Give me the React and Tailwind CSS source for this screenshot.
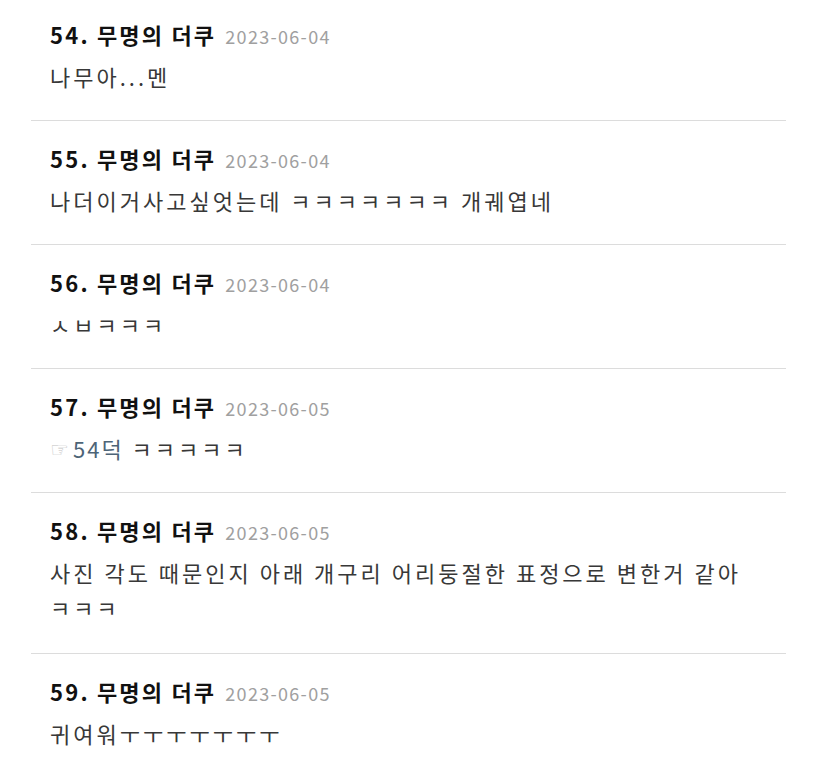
const comments = [
  { no: 54, date: '2023-06-04', body: ['나무아...멘'] },
  { no: 55, date: '2023-06-04', body: ['나더이거사고싶엇는데 ㅋㅋㅋㅋㅋㅋㅋ 개궤엽네'] },
  { no: 56, date: '2023-06-04', body: ['ㅅㅂㅋㅋㅋ'] },
  { no: 57, date: '2023-06-05', reply: '54덕', body: [' ㅋㅋㅋㅋㅋ'] },
  { no: 58, date: '2023-06-05', body: ['사진 각도 때문인지 아래 개구리 어리둥절한 표정으로 변한거 같아', 'ㅋㅋㅋ'] },
  { no: 59, date: '2023-06-05', body: ['귀여워ㅜㅜㅜㅜㅜㅜㅜ'] },
];

export default function App() {
  return (
    <div
      className="w-[830px] h-[762px] overflow-hidden bg-white"
      style={{ fontFamily: '"Noto Sans CJK KR", "Noto Sans", sans-serif' }}
    >
      <ul className="ml-[31px] w-[755px] -mt-[3px]">
        {comments.map((c) => {
          const multi = c.body.length > 1;
          return (
            <li
              key={c.no}
              className={
                multi
                  ? 'pl-[19px] pt-[22px] pb-[28px] border-b border-[#dcdcdc]'
                  : 'pl-[19px] pt-[22px] pb-[28px] border-b border-[#dcdcdc]'
              }
            >
              <div className="flex items-baseline h-[30px] leading-[30px] whitespace-nowrap">
                <span className="text-[22px] font-bold text-[#111] tracking-[2.2px]">
                  {c.no}. 무명의 더쿠
                </span>
                <span className="ml-[9px] text-[18px] text-[#a0a0a0] tracking-[1.3px]">{c.date}</span>
              </div>
              <div
                className={
                  multi
                    ? 'mt-[10px] text-[22px] text-[#383838] tracking-[3px]'
                    : 'mt-[12px] text-[22px] text-[#383838] tracking-[3px]'
                }
              >
                {c.body.map((line, i) => (
                  <div
                    key={i}
                    className={
                      multi
                        ? 'h-[35px] leading-[35px] whitespace-nowrap overflow-hidden'
                        : 'h-[31px] leading-[31px] whitespace-nowrap overflow-hidden'
                    }
                  >
                    {i === 0 && c.reply && (
                      <>
                        <span
                          className="inline-block w-[23px] text-[21px] leading-none text-[#c2c2c2] tracking-normal align-[1px]"
                          style={{ fontFamily: '"DejaVu Sans", sans-serif' }}
                        >
                          ☞
                        </span>
                        <span className="text-[#4d6477] tracking-[2px]">{c.reply}</span>
                      </>
                    )}
                    {line}
                  </div>
                ))}
              </div>
            </li>
          );
        })}
      </ul>
    </div>
  );
}
